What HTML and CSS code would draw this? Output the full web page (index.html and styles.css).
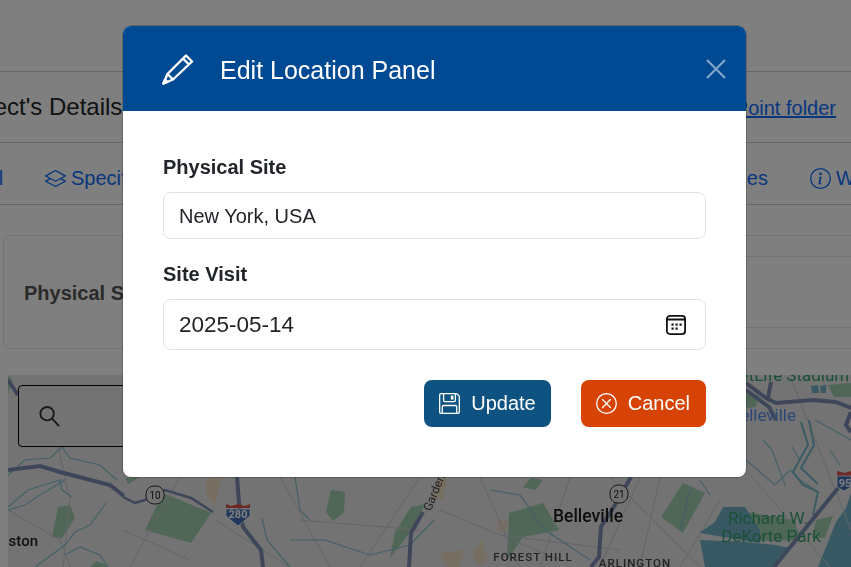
FILE: index.html
```html
<!DOCTYPE html>
<html lang="en">
<head>
<meta charset="utf-8">
<title>Edit Location Panel</title>
<link rel="stylesheet" href="styles.css">
</head>
<body>
<div class="page">
  <div class="topbar"></div>
  <div class="titlerow">
    <h1 class="pagetitle">Project's Details</h1>
    <a class="splink" href="#">SharePoint folder</a>
  </div>
  <nav class="tabs">
    <a class="tab tab-first" href="#">All</a>
    <a class="tab" href="#">
      <svg class="ico" viewBox="0 0 16 16" fill="currentColor"><path d="M8.235 1.559a.5.5 0 0 0-.47 0l-7.5 4a.5.5 0 0 0 0 .882L3.188 8 .264 9.559a.5.5 0 0 0 0 .882l7.5 4a.5.5 0 0 0 .47 0l7.5-4a.5.5 0 0 0 0-.882L12.813 8l2.922-1.559a.5.5 0 0 0 0-.882zm3.515 7.008L14.438 10 8 13.433 1.562 10 4.25 8.567l3.515 1.874a.5.5 0 0 0 .47 0zM8 9.433 1.562 6 8 2.567 14.438 6z"/></svg>
      Specifications
    </a>
    <a class="tab tab-fill" href="#">Site Images</a>
    <a class="tab tab-last" href="#">
      <svg class="ico" viewBox="0 0 16 16" fill="currentColor"><path d="M8 15A7 7 0 1 1 8 1a7 7 0 0 1 0 14m0 1A8 8 0 1 0 8 0a8 8 0 0 0 0 16"/><path d="m8.93 6.588-2.29.287-.082.38.45.083c.294.07.352.176.288.469l-.738 3.468c-.194.897.105 1.319.808 1.319.545 0 1.178-.252 1.465-.598l.088-.416c-.2.176-.492.246-.686.246-.275 0-.375-.193-.304-.533zM9 4.5a1 1 0 1 1-2 0 1 1 0 0 1 2 0"/></svg>
      Weather
    </a>
  </nav>
  <section class="card">
    <div class="cardlabel">Physical Site</div>
    <div class="cardtable"></div>
  </section>
  <section class="map">
    <svg class="mapart" viewBox="8 375 843 192" preserveAspectRatio="none">
      <g class="park">
        <path d="M58 507 70 505 75 518 62 538 52 537Z"/>
        <path d="M90 567 96 561 105 564 107 567Z"/>
        <path d="M8 375 12 380 8 395Z"/>
        <path d="M163 493 211 513 191 543 145 530Z"/>
        <path d="M331 490 345 492 344 512 333 521 326 512Z"/>
        <path d="M411 507 425 504 412 530 390 558 395 532Z"/>
        <path d="M543 503 559 530 523 537 507 560 509 513Z"/>
        <path d="M531 478 543 480 535 490 523 487Z"/>
        <path d="M683 483 705 493 683 533 661 517Z"/>
        <path d="M746 393 758 395 756 407 746 408Z"/>
        <path d="M828 385 851 383 851 397 834 397Z"/>
        <path d="M125 478 140 477 128 484Z"/>
        <path d="M746 512 795 520 800 540 746 541Z"/>
        <path d="M816 520 833 516 825 538 812 538Z"/>
      </g>
      <g class="pale">
        <path d="M206 478 222 477 215 505 207 497Z"/>
        <path d="M437 480 447 478 443 500 432 498Z"/>
        <path d="M440 553 465 550 458 570 446 566Z"/>
        <path d="M472 552 482 540 488 560 478 566Z"/>
        <path d="M498 520 508 522 505 534 497 530Z"/>
      </g>
      <g class="water">
        <path d="M699 533 715 522 723 507 745 507 760 530 760 543 700 533Z"/>
        <path d="M818 567 836 522 846 508 851 493 851 567Z"/>
        <path d="M700 540 746 542 776 545 789 548 773 567 705 567Z"/>
        <path d="M811 386 818 385 819 393 812 393Z"/>
        <path d="M820 386 826 385 826 393 821 393Z"/>
      </g>
      <g class="streets">
        <path d="M8 510 60 540 70 567M58 447 70 500 63 567M180 477 150 530 130 567M123 530 190 560M215 520 290 567M280 477 330 567M300 520 420 530M420 477 360 567M440 510 560 560M480 477 520 567M570 477 540 567M500 535 620 550M610 477 700 567M640 477 600 567M660 477 640 567M790 376 851 530M746 470 830 567M720 500 680 567"/>
      </g>
      <g class="rivers">
        <path d="M8 475 25 460 50 458 62 447 70 458 100 465 117 480"/>
        <path d="M8 507 28 490 60 480 62 490 72 497"/>
        <path d="M8 510 25 505 40 495 65 480"/>
        <path d="M106 503 90 525 75 532 65 545 35 567"/>
        <path d="M65 555 80 547 100 555 108 567"/>
        <path d="M262 518 267 540 290 567"/>
        <path d="M290 540 325 540 370 555 410 545 434 520"/>
        <path d="M295 477 300 510 310 520"/>
        <path d="M490 490 520 495 545 530 590 560"/>
        <path d="M746 460 775 485 790 470 800 480 818 492"/>
        <path d="M763 440 772 450 785 485M792 447 800 460"/>
        <path d="M815 420 851 440M830 450 840 465"/>
        <path d="M700 480 710 495M690 490 680 530"/>
      </g>
      <g class="rivers-wide">
        <path d="M801 422 808 445 793 472 803 485 818 492 813 515"/>
        <path d="M809 420 814 445 801 468 818 484"/>
      </g>
      <g class="hw">
        <path d="M8 470 40 466 60 472 110 485 124 496"/>
        <path d="M8 380 18 395"/>
        <path d="M237 477 239 503 243 527 261 550 263 567"/>
        <path d="M423 512 411 533 409 567"/>
        <path d="M746 383 766 398 776 403 813 400 836 402 851 408"/>
        <path d="M746 390 769 407 776 420"/>
        <path d="M771 382 768 398M851 412 846 425 851 432"/>
        <path d="M774 567 839 487"/>
        <path d="M631 477 612 510 601 527 599 557 591 567"/>
      </g>
      <path class="hwthin" d="M123 497 135 503 145 500 165 490 191 498 213 512"/>
      <g class="shieldround">
        <rect x="146" y="486" width="18" height="18" rx="8"/>
        <rect x="610" y="485" width="18" height="18" rx="8"/>
      </g>
      <g>
        <path class="shieldred" d="M226 508 250 508 250 504 245 506 238 504 231 506 226 504Z"/>
        <path class="shieldblue" d="M226 509 250 509 250 516 238 526 226 516Z"/>
        <path class="shieldred" d="M837 476 851 476 851 471 845 473 837 471Z"/>
        <path class="shieldblue" d="M837 476 851 476 851 487 844 491 837 487Z"/>
      </g>
      <text class="lbl-shield" x="155" y="499">10</text>
      <text class="lbl-shield" x="619" y="498">21</text>
      <text class="lbl-i" x="238" y="518">280</text>
      <text class="lbl-i" x="845" y="487">95</text>
      <text class="lbl-road" transform="translate(438 494) rotate(-68)">Garden</text>
      <text class="lbl-city" x="588" y="522" textLength="70" lengthAdjust="spacingAndGlyphs">Belleville</text>
      <text class="lbl-small" x="533" y="561">FOREST HILL</text>
      <text class="lbl-small" x="635" y="567">ARLINGTON</text>
      <text class="lbl-town" x="38" y="546">ston</text>
      <text class="lbl-blue" x="796" y="421">Belleville</text>
      <text class="lbl-green" x="787" y="381">MetLife Stadium</text>
      <text class="lbl-green" x="768" y="524">Richard W.</text>
      <text class="lbl-green" x="771" y="542">DeKorte Park</text>
    </svg>
    <div class="mapsearch">
      <svg class="mapsearch-ico" viewBox="0 0 24 24" fill="none" stroke="currentColor" stroke-width="2"><circle cx="9.500" cy="9" r="7"/><path d="M14.500 14 22 22"/></svg>
    </div>
  </section>
</div>

<div class="overlay">
  <div class="modal">
    <header class="modal-head">
      <svg class="modal-ico" viewBox="0 0 32 32" fill="none" stroke="currentColor" stroke-width="2.400" stroke-linejoin="round"><path d="M24 1.500 30 7.500 11 25.500 1.500 29.500 5.500 20Z"/><path d="M21 4.500 27 10.500M5.500 20 11 25.500"/><path d="M1.500 29.500 3 25.500 5.500 28Z" fill="currentColor"/></svg>
      <h2 class="modal-title">Edit Location Panel</h2>
      <button class="modal-close" type="button" aria-label="Close">
        <svg viewBox="0 0 20 20" width="20" height="20"><path d="M1 1 19 19M19 1 1 19"/></svg>
      </button>
    </header>
    <form class="modal-body">
      <label class="field-label" for="site">Physical Site</label>
      <input class="field field-text" id="site" type="text" value="New York, USA">
      <label class="field-label field-label-2" for="visit">Site Visit</label>
      <div class="field field-date">
        <input class="date-value" id="visit" type="text" value="2025-05-14">
        <svg class="cal-ico" viewBox="0 0 20 20" fill="none" stroke="#111" stroke-width="1.800"><rect x=".9" y=".9" width="18.200" height="18.200" rx="3"/><path d="M1 4.500H19"/><g fill="#111" stroke="none"><rect x="5.500" y="8.500" width="2.200" height="2.200"/><rect x="9.500" y="8.500" width="2.200" height="2.200"/><rect x="13.500" y="8.500" width="2.200" height="2.200"/><rect x="5.500" y="12.500" width="2.200" height="2.200"/><rect x="9.500" y="12.500" width="2.200" height="2.200"/></g></svg>
      </div>
      <div class="actions">
        <button class="btn btn-update" type="button">
          <svg class="btn-ico" viewBox="0 0 16 16" fill="currentColor"><path d="M11 2H9v3h2z"/><path d="M1.5 0h11.586a1.5 1.5 0 0 1 1.06.44l1.415 1.414A1.5 1.5 0 0 1 16 2.914V14.5a1.5 1.5 0 0 1-1.5 1.5h-13A1.5 1.5 0 0 1 0 14.5v-13A1.5 1.5 0 0 1 1.5 0M1 1.5v13a.5.5 0 0 0 .5.5H2v-4.5A1.5 1.5 0 0 1 3.5 9h9a1.5 1.5 0 0 1 1.5 1.5V15h.5a.5.5 0 0 0 .5-.5V2.914a.5.5 0 0 0-.146-.353l-1.415-1.415A.5.5 0 0 0 13.086 1H13v4.5A1.5 1.5 0 0 1 11.5 7h-7A1.5 1.5 0 0 1 3 5.5V1H1.5a.5.5 0 0 0-.5.5m3-.5v4.5a.5.5 0 0 0 .5.5h7a.5.5 0 0 0 .5-.5V1zM3 15h10v-4.5a.5.5 0 0 0-.5-.5h-9a.5.5 0 0 0-.5.5z"/></svg>
          Update
        </button>
        <button class="btn btn-cancel" type="button">
          <svg class="btn-ico" viewBox="0 0 16 16" fill="currentColor"><path d="M8 15A7 7 0 1 1 8 1a7 7 0 0 1 0 14m0 1A8 8 0 1 0 8 0a8 8 0 0 0 0 16"/><path d="M4.646 4.646a.5.5 0 0 1 .708 0L8 7.293l2.646-2.647a.5.5 0 0 1 .708.708L8.707 8l2.647 2.646a.5.5 0 0 1-.708.708L8 8.707l-2.646 2.647a.5.5 0 0 1-.708-.708L7.293 8 4.646 5.354a.5.5 0 0 1 0-.708"/></svg>
          Cancel
        </button>
      </div>
    </form>
  </div>
</div>
</body>
</html>
```
FILE: styles.css
```css
* { box-sizing: border-box; }
html, body { margin: 0; height: 100%; }
body {
  font-family: "Liberation Sans", Arial, sans-serif;
  color: #212529;
  background: #fff;
  overflow: hidden;
}
.page { height: 567px; overflow: hidden; display: flex; flex-direction: column; }
.topbar { height: 72px; flex: none; border-bottom: 1px solid #ccc; }
.titlerow {
  height: 71px; flex: none;
  display: flex; align-items: center; justify-content: space-between;
  padding: 0 15px 0 0;
  border-bottom: 1px solid #ccc;
}
.pagetitle { margin: 0 0 0 -49px; font-size: 24px; font-weight: 400; white-space: nowrap; }
.splink { font-size: 20px; color: #0d6efd; white-space: nowrap; margin-top: 2px; }
.tabs {
  height: 62px; flex: none;
  display: flex; align-items: center; padding-top: 9px;
  border-bottom: 1px solid #ccc;
  font-size: 20px;
}
.tab {
  display: flex; align-items: center; gap: 5px;
  color: #0d6efd; text-decoration: none; white-space: nowrap;
}
.tab-first { margin-left: -19px; width: 22px; margin-right: 42px; }
.tab-fill { flex: 1; justify-content: flex-end; margin-right: 42px; }
.tab-last { width: 41px; flex: none; }
.ico { width: 21px; height: 21px; flex: none; }
.card {
  height: 114px; flex: none;
  margin: 30px -60px 0 3px;
  display: flex; align-items: center;
  border: 1px solid #e4e4e4; border-radius: 8px;
  padding: 2px 0 0 20px;
}
.cardlabel { font-size: 20px; font-weight: 700; color: #555; white-space: nowrap; width: 400px; }
.cardtable { flex: 1; height: 72px; margin-bottom: 20px; border-top: 1px solid #e4e4e4; border-bottom: 1px solid #e4e4e4; align-self: flex-end; }
.map { position: relative; flex: 1; margin: 26px 0 0 8px; overflow: hidden; background: #e6e6e6; }
.mapart { display: block; width: 100%; height: 192px; filter: blur(.6px); }
.park path { fill: #a0cdac; }
.pale path { fill: #ecdcc0; }
.water path { fill: #70b2c6; }
.streets path { fill: none; stroke: #c6c9d0; stroke-width: 1; }
.rivers path { fill: none; stroke: #86bfd0; stroke-width: 1.2; }
.rivers-wide path { fill: none; stroke: #74b6c8; stroke-width: 2; }
.hw path { fill: none; stroke: #7c8cb4; stroke-width: 4; }
.hwthin { fill: none; stroke: #7c8cb4; stroke-width: 2.5; }
.shieldround rect { fill: #e6e6e6; stroke: #333; stroke-width: 1; }
.shieldred { fill: #d9534a; }
.shieldblue { fill: #3f6fb5; stroke: #fff; stroke-width: .8; }
.mapart text { font-family: Roboto, "Liberation Sans", sans-serif; text-anchor: middle; }
.lbl-shield { font-size: 10px; fill: #222; }
.lbl-i { font-size: 11px; font-weight: 700; fill: #fff; }
.lbl-road { font-size: 12px; fill: #444; }
.lbl-city { font-size: 18px; font-weight: 500; fill: #1c1c1c; }
.lbl-small { font-size: 11.5px; font-weight: 500; fill: #444; letter-spacing: 1px; }
.mapart .lbl-town { font-size: 15px; font-weight: 500; fill: #222; text-anchor: end; }
.mapart .lbl-blue { font-size: 17px; fill: #5a8ef0; text-anchor: end; }
.lbl-green { font-size: 17px; fill: #35a06c; }
.mapsearch {
  position: absolute; left: 10px; top: 10px;
  width: 320px; height: 62px;
  display: flex; align-items: center; padding: 0 0 0 19px;
  border: 1px solid #000; border-radius: 4px; background: #e6e6e6;
}
.mapsearch-ico { width: 23px; height: 23px; color: #333; }
.overlay {
  position: fixed; inset: 0;
  background: rgba(0, 0, 0, .5);
  padding: 26px 0 0 123px;
}
.modal {
  width: 623px; height: 451px;
  background: #fff; border-radius: 8px; overflow: hidden;
  box-shadow: 0 0 0 1px rgba(0, 0, 0, .2);
}
.modal-head {
  height: 85px;
  display: flex; align-items: center;
  padding: 0 20px 0 39px;
  background: #004a94; color: #fff;
}
.modal-ico { width: 32px; height: 32px; flex: none; margin-top: 2px; }
.modal-title { margin: 3px 0 0 26px; font-size: 25px; font-weight: 400; line-height: 30px; }
.modal-close {
  margin-left: auto; padding: 0; border: 0; background: none; height: 20px; display: block;
}
.modal-close svg { display: block; }
.modal-close path { stroke: rgba(255, 255, 255, .5); stroke-width: 2.2; fill: none; }
.modal-body { padding: 44px 40px 0; display: flex; flex-direction: column; }
.field-label { font-size: 20px; font-weight: 700; line-height: 24px; margin-bottom: 13px; color: #212529; }
.field-label-2 { margin-top: 23px; }
.field {
  width: 100%; border: 1px solid #dee2e6; border-radius: 8px;
  padding: 0 15px; background: #fff; color: #212529;
  font-family: "Liberation Sans", Arial, sans-serif; outline: none;
}
.field-text { height: 47px; font-size: 20px; padding-top: 2px; }
.field-date { height: 51px; display: flex; align-items: center; padding-right: 19px; }
.date-value {
  flex: 1; min-width: 0; border: 0; padding: 0; outline: none; color: #212529; background: none;
  font: 400 22.5px "Liberation Sans", Arial, sans-serif;
}
.cal-ico { width: 20px; height: 20px; flex: none; }
.actions { display: flex; justify-content: flex-end; gap: 30px; margin-top: 30px; }
.btn {
  height: 47px; display: flex; align-items: center; gap: 11px;
  border: 0; border-radius: 8px; color: #fff; padding: 0 15px;
  font: 400 20px "Liberation Sans", Arial, sans-serif;
}
.btn-update { background: #0d5280; }
.btn-cancel { background: #d64304; padding-right: 16px; }
.btn-ico { width: 21px; height: 21px; flex: none; }
```
